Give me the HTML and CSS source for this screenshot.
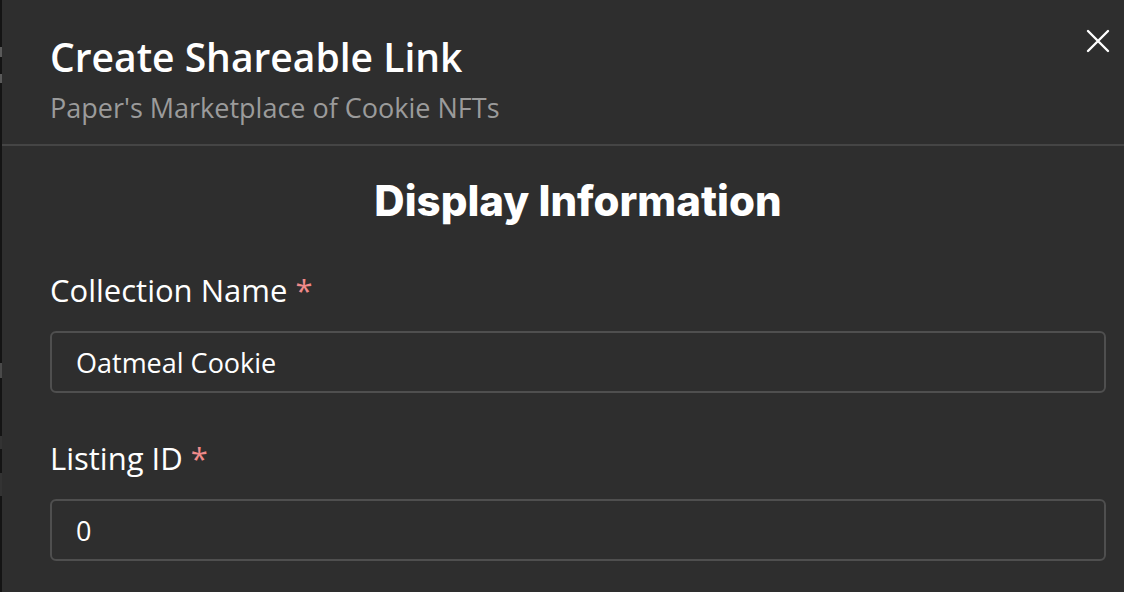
FILE: index.html
```html
<!DOCTYPE html>
<html lang="en">
<head>
<meta charset="utf-8">
<title>Create Shareable Link</title>
<link rel="stylesheet" href="styles.css">
</head>
<body>
<div class="page">
  <div class="backdrop-edge"></div>
  <section class="modal">
    <header class="modal-header">
      <h1 class="modal-title">Create Shareable Link</h1>
      <p class="modal-subtitle">Paper's Marketplace of Cookie NFTs</p>
      <button class="close-btn" aria-label="Close">
        <svg viewBox="0 0 24 24" width="24" height="24"><path d="M2 2 L22 22 M22 2 L2 22" stroke="#fff" stroke-width="2.4" stroke-linecap="round" fill="none"/></svg>
      </button>
    </header>
    <div class="modal-body">
      <h2 class="section-title">Display Information</h2>
      <div class="field">
        <label class="field-label">Collection Name <span class="req">*</span></label>
        <div class="input">Oatmeal Cookie</div>
      </div>
      <div class="field">
        <label class="field-label">Listing ID <span class="req">*</span></label>
        <div class="input">0</div>
      </div>
    </div>
  </section>
</div>
</body>
</html>
```

FILE: styles.css
```css
* { box-sizing: border-box; }
html, body {
  margin: 0;
  padding: 0;
  width: 1124px;
  height: 592px;
  overflow: hidden;
  background: #141414;
}
.page {
  display: flex;
  width: 1124px;
  height: 592px;
}
.backdrop-edge {
  flex: 0 0 2px;
  background:
    linear-gradient(to bottom,
      #141414 0, #141414 47px, #5a5a5a 47px, #5a5a5a 57px,
      #141414 57px, #141414 74px, #5a5a5a 74px, #5a5a5a 83px,
      #141414 83px, #141414 363px, #4a4a4a 363px, #4a4a4a 378px,
      #141414 378px, #141414 436px, #333 436px, #333 449px,
      #141414 449px, #141414 473px, #333 473px, #333 496px,
      #141414 496px);
}
.modal {
  flex: 0 0 1152px;
  position: relative;
  background: #2e2e2e;
  color: #fff;
  font-family: "Open Sans", "Noto Sans", sans-serif;
}
.modal-header {
  padding: 33px 48px 17px;
  border-bottom: 2px solid #454545;
}
.modal-title {
  margin: 0;
  font-size: 39px;
  line-height: 47px;
  font-weight: 600;
  color: #fff;
}
.modal-subtitle {
  margin: 8px 0 0;
  font-size: 27px;
  line-height: 39px;
  font-weight: 400;
  color: #9b9b9b;
}
.close-btn {
  position: absolute;
  top: 29px;
  left: 1084px;
  width: 24px;
  height: 24px;
  padding: 0;
  border: 0;
  background: none;
  display: flex;
}
.modal-body {
  padding: 27px 48px 0;
}
.section-title {
  margin: 0;
  text-align: center;
  font-family: "Inter", sans-serif;
  font-weight: 800;
  font-size: 42px;
  line-height: 56px;
  color: #fff;
}
.field {
  display: flex;
  flex-direction: column;
  margin-top: 37px;
}
.field + .field { margin-top: 41px; }
.field-label {
  font-size: 31px;
  line-height: 48px;
  color: #fff;
  margin-bottom: 17px;
}
.req { color: #f08a8a; }
.input {
  height: 62px;
  border: 2px solid #4f4f4f;
  border-radius: 6px;
  padding: 0 24px;
  display: flex;
  align-items: center;
  font-size: 27px;
  color: #fff;
}
```
